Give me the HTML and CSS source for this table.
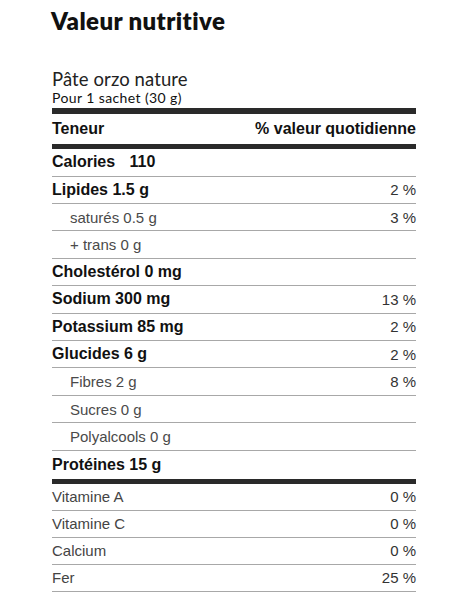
FILE: index.html
```html
<!DOCTYPE html>
<html lang="fr">
<head>
<meta charset="utf-8">
<link rel="stylesheet" href="styles.css">
</head>
<body>
<div class="label">
  <h1 class="title">Valeur nutritive</h1>
  <div class="product">Pâte orzo nature</div>
  <div class="serving">Pour 1 sachet (30 g)</div>
  <div class="bar bar-top"></div>
  <div class="head-row"><span>Teneur</span><span>% valeur quotidienne</span></div>
  <div class="bar"></div>
  <div class="row main first"><span>Calories <span class="cal">110</span></span><span></span></div>
  <div class="row main"><span>Lipides 1.5 g</span><span class="pct">2 %</span></div>
  <div class="row sub"><span>saturés 0.5 g</span><span class="pct">3 %</span></div>
  <div class="row sub"><span>+ trans 0 g</span><span></span></div>
  <div class="row main"><span>Cholestérol 0 mg</span><span></span></div>
  <div class="row main"><span>Sodium 300 mg</span><span class="pct">13 %</span></div>
  <div class="row main"><span>Potassium 85 mg</span><span class="pct">2 %</span></div>
  <div class="row main"><span>Glucides 6 g</span><span class="pct">2 %</span></div>
  <div class="row sub"><span>Fibres 2 g</span><span class="pct">8 %</span></div>
  <div class="row sub"><span>Sucres 0 g</span><span></span></div>
  <div class="row sub"><span>Polyalcools 0 g</span><span></span></div>
  <div class="row main last"><span>Protéines 15 g</span><span></span></div>
  <div class="bar"></div>
  <div class="row vit"><span>Vitamine A</span><span class="pct">0 %</span></div>
  <div class="row vit"><span>Vitamine C</span><span class="pct">0 %</span></div>
  <div class="row vit"><span>Calcium</span><span class="pct">0 %</span></div>
  <div class="row vit"><span>Fer</span><span class="pct">25 %</span></div>
</div>
</body>
</html>
```

FILE: styles.css
```css
html, body {
  margin: 0;
  padding: 0;
  background: #fff;
}

.label {
  width: 364px;
  margin-left: 52px;
  padding-top: 6px;
  font-family: "Liberation Sans", Arial, sans-serif;
  color: #111;
}

.title {
  margin: 0 0 0 -1px;
  font-family: Lato, "Noto Sans", sans-serif;
  font-weight: 800;
  font-size: 24px;
  line-height: 30px;
  letter-spacing: 0.4px;
  color: #111;
}

.product {
  margin-top: 32px;
  font-family: Lato, "Noto Sans", sans-serif;
  font-size: 18.5px;
  line-height: 22px;
  letter-spacing: 0.1px;
  color: #222;
}

.serving {
  font-family: Lato, "Noto Sans", sans-serif;
  font-size: 14px;
  line-height: 16px;
  letter-spacing: 0.4px;
  color: #111;
}

.bar {
  height: 5px;
  background: #2a2a2a;
}

.bar-top {
  margin-top: 2px;
  height: 6px;
}

.head-row {
  display: flex;
  justify-content: space-between;
  align-items: center;
  height: 30px;
  font-weight: bold;
  font-size: 16px;
  color: #111;
}

.row {
  display: flex;
  justify-content: space-between;
  align-items: center;
  height: 26.4px;
  border-bottom: 1px solid #a8a8a8;
}

.row.main {
  font-weight: bold;
  font-size: 16px;
  color: #111;
}

.row.main .pct {
  font-weight: normal;
  font-size: 15px;
  color: #333;
}

.row.first {
  height: 26.7px;
}

.cal {
  margin-left: 10px;
}

.row.sub {
  font-size: 15px;
  color: #4a4a4a;
  padding-left: 18px;
}

.row.sub .pct {
  color: #333;
}

.row.last {
  height: 28px;
  border-bottom: none;
}

.row.vit {
  font-size: 15px;
  color: #444;
  height: 26px;
}

.row.vit .pct {
  color: #333;
}
```
